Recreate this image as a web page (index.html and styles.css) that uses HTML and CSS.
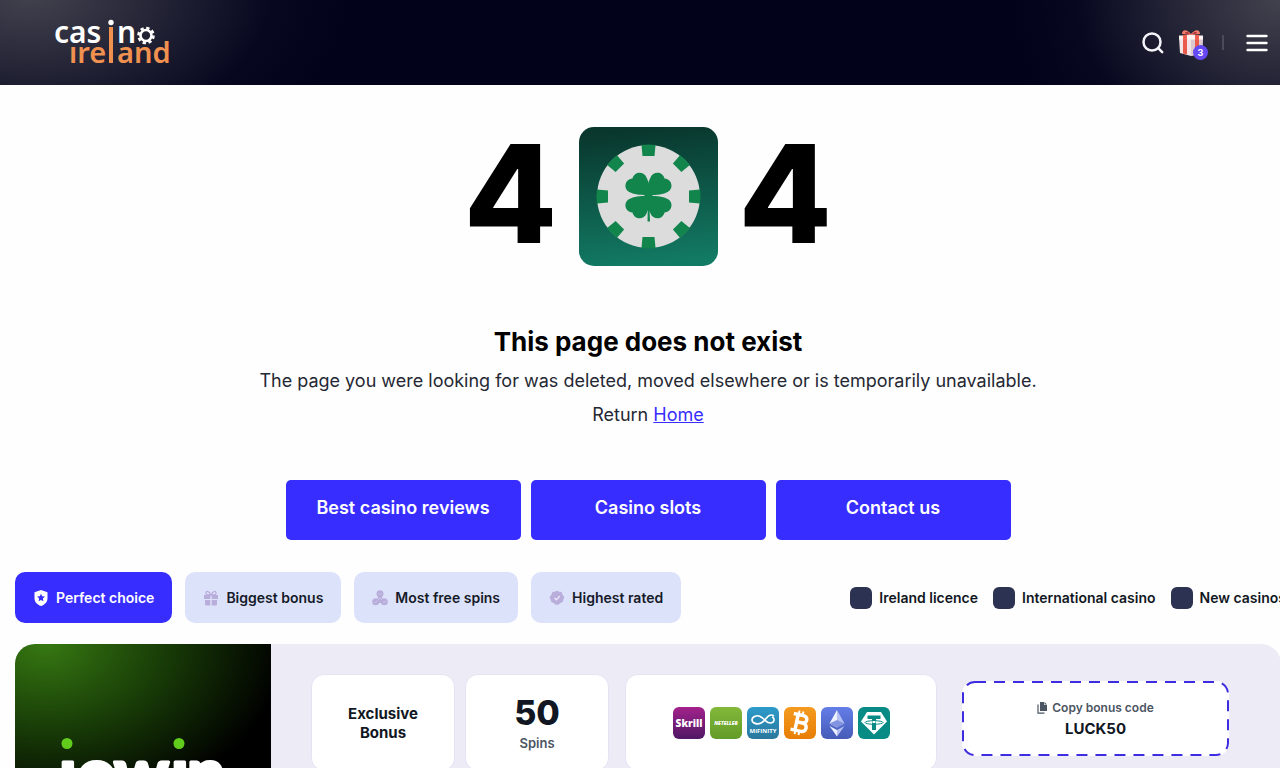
FILE: index.html
```html
<!DOCTYPE html>
<html lang="en">
<head>
<meta charset="utf-8">
<meta name="viewport" content="width=device-width, initial-scale=1">
<title>Page not found - Casino Ireland</title>
<link rel="stylesheet" href="styles.css">
</head>
<body>
<header class="header">
  <a class="logo" href="#" aria-label="Casino Ireland">
    <svg width="120" height="50" viewBox="0 0 120 50">
      <g class="logo-white"><text x="-1" y="25">cas</text><text x="62" y="25">n</text>
        <circle cx="56" cy="4.500" r="2.700"/></g>
      <circle cx="91" cy="17.500" r="5.500" fill="none" stroke="#fff" stroke-width="2.600"/>
      <circle cx="91" cy="17.500" r="7.500" fill="none" stroke="#fff" stroke-width="2.600" stroke-dasharray="3.300 2.590"/>
      <g class="logo-orange"><text x="14" y="45">ıre</text><text x="62" y="45">and</text>
        <path d="M54 9h4v36h-4z"/></g>
    </svg>
  </a>
  <div class="tools">
    <button class="tool" aria-label="Search"><svg width="22" height="22" viewBox="0 0 22 22" fill="none" stroke="#f4f4fb" stroke-width="2.500" stroke-linecap="round"><circle cx="10" cy="10" r="8.500"/><path d="M16.200 16.200l4 4"/></svg></button>
    <button class="tool gift" aria-label="Bonuses">
      <svg width="26" height="28" viewBox="0 0 26 28">
        <path d="M1 8l12-3 12 3-1 16-11 3-11-3z" fill="#f3e4e5"/><path d="M13 8l12-1-1 17-11 3z" fill="#dcc9d0"/>
        <path d="M5 7l4-1v19.500l-4-1zM17 6l4 .5v18l-4 1z" fill="#ea5a4b"/>
        <path d="M1 6.500h24v4H1z" fill="#fff3f1"/><path d="M5 6h4v5H5zM17 6h4v5h-4z" fill="#ee6253"/>
        <path d="M13 5C8-1 4 1 4 5l9 1zm0 0c5-6 9-4 9 0l-9 1z" fill="#f37c6b"/><path d="M12 5c-3-3-5-2-5-.5zm2 0c3-3 5-2 5-.5z" fill="#a83237"/>
      </svg>
      <span class="badge">3</span>
    </button>
    <span class="divider"></span>
    <button class="tool" aria-label="Menu"><svg width="22" height="18" viewBox="0 0 22 18" stroke="#fff" stroke-width="2.400" stroke-linecap="round"><path d="M1.500 2h19M1.500 9h19M1.500 16h19"/></svg></button>
  </div>
</header>

<main class="page">
  <section class="hero">
    <div class="code404">
      <span>4</span>
      <svg width="139" height="139" viewBox="0 0 139 139" role="img" aria-label="0">
        <defs>
          <linearGradient id="tile" x1="0.450" y1="0" x2="0.550" y2="1"><stop offset="0" stop-color="#09362d"/><stop offset="1" stop-color="#127b64"/></linearGradient>
          <path id="notch" d="M-7-51.500Q0-52.500 7-51.500L6-40.500H-6z"/>
          <path id="leaf" d="M0 0C-2-6-1-12 2-18 4-24 14-25 16-17 25-16 25-5 18-3 12 0 6-1 0 0z"/>
        </defs>
        <rect width="139" height="139" rx="15" fill="url(#tile)"/>
        <g transform="translate(69.500 69.500)">
          <circle r="51.500" fill="#dcdcdc"/>
          <g fill="#11854c">
            <use href="#notch"/><use href="#notch" transform="rotate(45)"/><use href="#notch" transform="rotate(90)"/><use href="#notch" transform="rotate(135)"/><use href="#notch" transform="rotate(180)"/><use href="#notch" transform="rotate(225)"/><use href="#notch" transform="rotate(270)"/><use href="#notch" transform="rotate(315)"/>
            <use href="#leaf" transform="translate(0 -1)"/><use href="#leaf" transform="translate(0 -1) scale(-1 1)"/><use href="#leaf" transform="translate(0 -1) scale(1 -1)"/><use href="#leaf" transform="translate(0 -1) scale(-1 -1)"/>
            <path d="M-4-6h8V4h-8zM-.5 0H.5L1.500 25H-1z"/>
          </g>
        </g>
      </svg>
      <span>4</span>
    </div>
    <h1 class="title">This page does not exist</h1>
    <p class="lead">The page you were looking for was deleted, moved elsewhere or is temporarily unavailable.</p>
    <p class="lead">Return <a href="#">Home</a></p>
    <nav class="actions">
      <a href="#">Best casino reviews</a><a href="#">Casino slots</a><a href="#">Contact us</a>
    </nav>
  </section>

  <section class="toolbar">
    <div class="tabs">
      <button class="tab active"><svg width="16" height="16" viewBox="0 0 16 16"><path fill="#fff" d="M8 0l6.500 2.200V8c0 4-2.500 6.500-6.500 8-4-1.500-6.500-4-6.500-8V2.200z"/><path fill="#382dff" d="M8 3.800l1.200 2.500 2.700.3-2 1.900.5 2.700L8 9.900l-2.400 1.300.5-2.700-2-1.900 2.700-.3z"/></svg>Perfect choice</button>
      <button class="tab"><svg width="16" height="16" viewBox="0 0 16 16"><path fill="#b8addb" d="M1 5h6.300v4H1zM8.700 5H15v4H8.700zM2 10h5.300v5.500H3.500Q2 15.500 2 14zM8.700 10H14v4q0 1.500-1.500 1.500H8.700z"/><path fill="none" stroke="#b8addb" stroke-width="1.300" d="M8 5C6 .5 2.500.5 3 3.500 3.200 5 6 5 8 5c2 0 4.800 0 5-1.500C13.500.5 10 .5 8 5z"/></svg>Biggest bonus</button>
      <button class="tab"><svg width="16" height="16" viewBox="0 0 16 16"><g fill="#b8addb"><circle cx="8" cy="3.800" r="3.500"/><circle cx="3.700" cy="11.800" r="3.500"/><circle cx="12.300" cy="11.800" r="3.500"/><path d="M7 6h2l3 5-1 2H5l-1-2z"/></g><g fill="none" stroke="#cfcdf0" stroke-width=".8"><path d="M6.700 3.700l1 1 1.700-1.900M2.400 11.800l1 1 1.700-2M11 11.800l1 1 1.700-2M6 10l2-2 2 2"/></g></svg>Most free spins</button>
      <button class="tab"><svg width="16" height="16" viewBox="0 0 16 16"><path fill="#b8addb" stroke="#b8addb" stroke-linejoin="round" d="M8 1l2 1.200 2.400.2.700 2.300L14.800 7 14 9.300l-.6 2.400-2.300.9L9.300 14.300 8 14l-1.300.3-1.800-1.700-2.300-.9L2 9.300 1.200 7l1.700-2.300.7-2.300L6 2.200z"/><path fill="none" stroke="#eceafb" stroke-width="1.200" d="M5.500 8l1.900 1.800L10.700 6"/></svg>Highest rated</button>
    </div>
    <div class="filters">
      <label class="filter"><input type="checkbox">Ireland licence</label>
      <label class="filter"><input type="checkbox">International casino</label>
      <label class="filter"><input type="checkbox">New casinos</label>
    </div>
  </section>

  <article class="offer">
    <a class="brand" href="#" aria-label="Casino review">
      <svg width="164" height="70" viewBox="0 0 164 70">
        <g fill="#62cc1c"><circle cx="6" cy="6.500" r="5.500"/><circle cx="118" cy="6.500" r="5.500"/></g>
        <g class="brand-name"><text x="-2" y="60">ı</text><text x="16" y="60">o</text><text x="53" y="60">w</text><text x="110" y="60">ı</text><text x="126" y="60">n</text></g>
      </svg>
    </a>
    <div class="details">
      <div class="bonus">
        <div class="box exclusive">Exclusive<br>Bonus</div>
        <div class="box spins"><strong>50</strong><span>Spins</span></div>
      </div>
      <div class="box payments">
        <svg class="pay" viewBox="0 0 32 32"><defs><linearGradient id="sk" x2="0" y2="1"><stop stop-color="#a4228c"/><stop offset="1" stop-color="#4f1764"/></linearGradient></defs><rect width="32" height="32" rx="6" fill="url(#sk)"/><text class="skrill" x="16" y="20" text-anchor="middle">Skrill</text></svg>
        <svg class="pay" viewBox="0 0 32 32"><defs><linearGradient id="nt" x2="0" y2="1"><stop stop-color="#83b83a"/><stop offset="1" stop-color="#629b27"/></linearGradient></defs><rect width="32" height="32" rx="6" fill="url(#nt)"/><text class="neteller" x="16" y="18" text-anchor="middle">NETELLER</text></svg>
        <svg class="pay" viewBox="0 0 32 32"><defs><linearGradient id="mf" x2="0" y2="1"><stop stop-color="#2c9bcb"/><stop offset="1" stop-color="#2a789d"/></linearGradient></defs><rect width="32" height="32" rx="6" fill="url(#mf)"/><path d="M27 9C21 5 19 14 14 16c-4 2-9 0-9-3s5-6 9-3c4 2 5 6 9 6 5 0 5-5 2-6" fill="none" stroke="#fff" stroke-width="1.600"/><text class="mifinity" x="16" y="26" text-anchor="middle">MiFINITY</text></svg>
        <svg class="pay" viewBox="0 0 32 32"><defs><linearGradient id="bt" x2="0" y2="1"><stop stop-color="#f59a20"/><stop offset="1" stop-color="#e77e05"/></linearGradient></defs><rect width="32" height="32" rx="6" fill="url(#bt)"/><g transform="rotate(12 16 16)" fill="none" stroke="#fff"><path stroke-width="3.500" d="M8 8h9.500c6 0 6 7.500 0 7.500H12h6.500c6 0 6 8.500 0 8.500H8M12.500 8v16"/><path stroke-width="2" d="M13 4v4m4-4v4m-4 16v4m4-4v4"/></g></svg>
        <svg class="pay" viewBox="0 0 32 32"><defs><linearGradient id="et" x2="0" y2="1"><stop stop-color="#647de8"/><stop offset="1" stop-color="#465bb7"/></linearGradient></defs><rect width="32" height="32" rx="6" fill="url(#et)"/><path fill="#edf0ff" d="M16 3L8.500 16.500 16 20.500zM8.500 19L16 29.500V23z"/><path fill="#b5c0f2" d="M16 3l7.500 13.500L16 20.500zM23.500 19L16 29.500V23z"/><path fill="#8294df" d="M8.500 16.500L16 13l7.500 3.500L16 20.500z"/></svg>
        <svg class="pay" viewBox="0 0 32 32"><rect width="32" height="32" rx="6" fill="#078b84"/><path fill="#fff" d="M9 5h14l6 9.500L16 27.500 3 14.500z"/><path fill="#078b84" d="M9.500 8.500h13V12H18v11h-4V12H9.500z"/><ellipse cx="16" cy="15.500" rx="9" ry="1.800" fill="none" stroke="#078b84"/><path fill="#fff" d="M14.500 14h3v2h-3z"/></svg>
      </div>
      <button class="coupon">
        <svg class="dash" aria-hidden="true"><rect x="1" y="1" rx="12"/></svg>
        <span class="copy"><svg width="10" height="12" viewBox="0 0 10 12"><path fill="#4b5563" d="M3 0h4v3h3v6H3z M7.500 0L10 2.500H7.500z"/><path fill="none" stroke="#4b5563" stroke-width="1.200" d="M1 2.500v8.700h6.500"/></svg>Copy bonus code</span>
        <strong>LUCK50</strong>
      </button>
    </div>
  </article>
</main>
</body>
</html>
```

FILE: styles.css
```css
* { box-sizing: border-box; }
body {
  margin: 0;
  overflow-x: hidden;
  background: #fefefe;
  color: #111722;
  font-family: Inter, "Open Sans", sans-serif;
}
button { border: 0; margin: 0; font: inherit; cursor: pointer; }
svg { display: block; }

.header {
  display: flex;
  align-items: center;
  justify-content: space-between;
  height: 85px;
  padding: 0 12px 0 55px;
  background:
    radial-gradient(ellipse 320px 190px at 30px -5px, #42424e, rgba(50, 50, 66, 0.7) 40%, rgba(20, 21, 46, 0.3) 75%, transparent),
    radial-gradient(ellipse 270px 210px at 100% 0, #42424e, rgba(50, 50, 66, 0.7) 40%, rgba(20, 21, 46, 0.3) 75%, transparent),
    #02031a;
}
.logo { text-decoration: none; }
.logo svg { overflow: visible; }
.logo text { font: 600 30px "Noto Sans", sans-serif; }
.logo-white { fill: #fff; }
.logo-orange { fill: #f0914f; }
.logo .logo-orange text { font-size: 29px; }
.tools { display: flex; align-items: center; gap: 14px; }
.tool { position: relative; padding: 0; background: none; }
.badge {
  position: absolute;
  right: -4px;
  bottom: -3px;
  width: 15px;
  height: 15px;
  border-radius: 50%;
  background: #6549f5;
  color: #fff;
  font-size: 9px;
  font-weight: 700;
  line-height: 15px;
}
.divider { width: 2px; height: 15px; margin: 0 8px 0 4px; background: #494a5c; }

.page { margin-right: -16px; padding: 42px 15px 32px; }
.hero { text-align: center; }
.code404 { display: flex; align-items: flex-start; justify-content: center; gap: 21px; }
.code404 span {
  color: #000;
  font: 800 136px/133px Inter, sans-serif;
}
.title { margin: 58px 0 4px; color: #000; font-size: 26px; line-height: 36px; font-weight: 700; }
.lead { margin: 0; color: #252833; font-size: 18px; line-height: 34px; }
.lead a { color: #382dff; }
.actions { display: flex; justify-content: center; gap: 10px; margin-top: 48px; }
.actions a {
  width: 235px;
  padding: 16px 10px 20px;
  border-radius: 5px;
  background: #382dff;
  color: #fff;
  font-size: 18px;
  font-weight: 600;
  line-height: 24px;
  text-decoration: none;
}

.toolbar { display: flex; align-items: center; justify-content: space-between; margin-top: 32px; white-space: nowrap; }
.tabs { display: flex; gap: 13px; }
.tab {
  display: flex;
  align-items: center;
  gap: 7px;
  height: 51px;
  padding: 0 18px;
  border-radius: 10px;
  background: #dde2fb;
  color: #151b28;
  font-size: 14px;
  font-weight: 600;
}
.active { background: #382dff; color: #fff; }
.filters { display: flex; gap: 15px; margin-right: -5px; }
.filter { display: flex; align-items: center; gap: 7px; font-size: 14px; font-weight: 600; }
.filter input {
  appearance: none;
  width: 22px;
  height: 22px;
  margin: 0;
  border-radius: 6px;
  background: #2b3252;
}

.offer { display: flex; margin-top: 21px; border-radius: 20px; overflow: hidden; background: #ecebf6; }
.brand {
  display: flex;
  align-items: center;
  justify-content: center;
  flex: 0 0 256px;
  min-height: 256px;
  background: radial-gradient(ellipse 240px 170px at 30px 0, #367812, #183c07 50%, #000);
}
.brand svg { overflow: visible; }
.brand-name { fill: #fff; stroke: #fff; stroke-width: 3px; stroke-linejoin: round; font: 900 68px Lato, sans-serif; }
.details { display: flex; align-items: flex-start; flex: 1; padding: 30px 52px 0 40px; }
.bonus { display: flex; gap: 10px; margin-right: 16px; }
.box {
  display: flex;
  align-items: center;
  justify-content: center;
  height: 97px;
  border: 1px solid #e5e2f4;
  border-radius: 13px;
  background: #fff;
}
.bonus .box { width: 144px; }
.exclusive { font-size: 15px; font-weight: 700; line-height: 19px; text-align: center; }
.spins { flex-direction: column; }
.spins strong { font-size: 34px; line-height: 40px; font-weight: 800; }
.spins span { color: #4b5563; font-size: 13px; line-height: 20px; font-weight: 600; }
.payments { flex: 0 1 312px; gap: 5px; margin-right: 25px; }
.pay { width: 32px; height: 32px; }
.pay text { fill: #fff; font-family: "Open Sans", sans-serif; }
.pay .skrill { font-size: 10px; font-weight: 800; }
.pay .neteller { font-size: 5px; font-weight: 800; font-style: italic; }
.pay .mifinity { font-size: 6px; font-weight: 700; }
.coupon {
  position: relative;
  display: flex;
  flex: 1;
  flex-direction: column;
  align-items: center;
  justify-content: center;
  height: 75px;
  margin-top: 7px;
  padding: 0;
  border-radius: 13px;
  background: #fff;
  color: #111722;
}
.dash { position: absolute; inset: 0; width: 100%; height: 100%; }
.dash rect {
  width: calc(100% - 2px);
  height: calc(100% - 2px);
  fill: none;
  stroke: #3d2ce0;
  stroke-width: 2px;
  stroke-dasharray: 11px 8px;
}
.copy { display: flex; align-items: center; gap: 5px; color: #4b5563; font-size: 12px; line-height: 20px; font-weight: 600; }
.coupon strong { font-size: 15px; line-height: 22px; font-weight: 700; }
```
